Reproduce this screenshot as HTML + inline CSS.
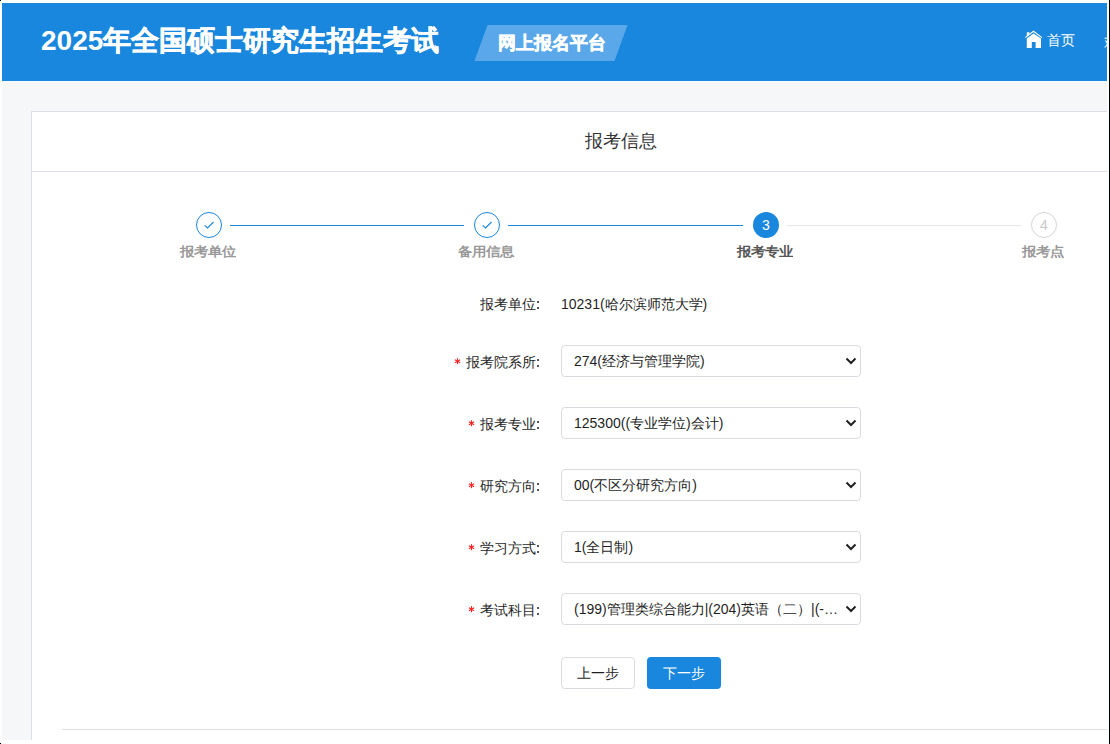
<!DOCTYPE html>
<html><head><meta charset="utf-8">
<style>
*{margin:0;padding:0;box-sizing:border-box;}
html,body{width:1110px;height:744px;overflow:hidden;background:#fff;font-family:"Liberation Sans",sans-serif;}
#frame{position:absolute;left:2px;top:3px;width:1105px;height:737px;overflow:hidden;background:#f6f7f9;}
.a{position:absolute;white-space:nowrap;}
.dot{position:absolute;background:#000;}
.stk{-webkit-text-stroke:0.5px #fff;}
.hdr{position:absolute;left:0;top:0;width:1105px;height:78px;background:#1a87de;}
.title{font-size:28px;font-weight:bold;color:#fff;line-height:36px;}
.badge{position:absolute;width:140px;height:36px;background:#5aa8ea;transform:skewX(-20deg);}
.badgetxt{font-size:18px;font-weight:bold;color:#fff;line-height:24px;}
.hometxt{font-size:14px;color:#fff;line-height:20px;}
.card{position:absolute;left:29px;top:108px;width:1180px;height:700px;background:#fff;border:1px solid #dcdfe6;}
.cardtitle{position:absolute;left:0;top:0;width:1178px;height:60px;border-bottom:1px solid #dcdfe6;}
.ct{font-size:18px;color:#333;line-height:24px;}
.step{position:absolute;width:26px;height:26px;border-radius:50%;}
.line{position:absolute;height:1px;}
.slabel{font-size:14px;font-weight:bold;line-height:18px;text-align:center;width:120px;transform:scaleY(0.9);}
.lbl{font-size:14px;color:#1f1f1f;line-height:20px;}
.col{position:absolute;width:2px;height:2px;background:#555;}
.sel{position:absolute;width:300px;height:32px;border:1px solid #d8dbe0;border-radius:4px;background:#fff;}
.sel span{position:absolute;left:12px;top:5px;font-size:14px;color:#1f1f1f;line-height:20px;white-space:nowrap;}
.sel svg{position:absolute;right:2px;top:10px;}
.btn{position:absolute;width:74px;height:32px;border-radius:4px;font-size:14px;line-height:30px;text-align:center;}
.val{font-size:14px;color:#1f1f1f;line-height:20px;}
.hr{position:absolute;height:1px;background:#dcdfe6;}
</style></head><body>
<div class="dot" style="left:0;top:0;width:1px;height:1px;"></div>
<div class="dot" style="left:0;top:743px;width:1px;height:1px;"></div>
<div class="dot" style="left:1109px;top:0;width:1px;height:744px;"></div>
<div id="frame">
  <div class="hdr"></div>
  <div class="a title" style="left:39px;top:20px;">2025<span class="stk">年全国硕士研究生招生考试</span></div>
  <div class="badge" style="left:479px;top:22px;"></div>
  <div class="a badgetxt stk" style="left:496px;top:28px;">网上报名平台</div>
  <svg class="a" style="left:1018px;top:23px;" width="28" height="26" viewBox="0 0 28 26"><polyline points="5.2,11.6 13.5,5.2 21.9,11.6" fill="none" stroke="#fff" stroke-width="1.1"/><polygon points="6.8,12.6 13.5,7.4 21,12.6 21,22 15.6,22 15.6,16 11.8,16 11.8,22 6.8,22" fill="#fff"/><polygon points="6.8,6.3 9.4,6.3 9.4,8.6 6.8,10.6" fill="#fff"/></svg>
  <div class="a hometxt" style="left:1045px;top:27px;">首页</div>
  <div class="a hometxt" style="left:1102px;top:28.5px;">欢迎</div>
  <div class="card"><div class="cardtitle"></div></div>
  <div class="a ct" style="left:583px;top:126px;">报考信息</div>
  <div class="line" style="left:228px;top:222px;width:234px;background:#1a87de"></div>
  <div class="line" style="left:506px;top:222px;width:235px;background:#1a87de"></div>
  <div class="line" style="left:785px;top:222px;width:234px;background:#e4e7ed"></div>
  <div class="step" style="left:194px;top:209px;border:1px solid #1a87de"><svg width="24" height="24" viewBox="0 0 24 24" style="position:absolute;left:0;top:0"><path d="M7.7 12.3 L10.5 14.9 L16.5 9.0" fill="none" stroke="#1a87de" stroke-width="1.1"/></svg></div>
  <div class="step" style="left:472px;top:209px;border:1px solid #1a87de"><svg width="24" height="24" viewBox="0 0 24 24" style="position:absolute;left:0;top:0"><path d="M7.7 12.3 L10.5 14.9 L16.5 9.0" fill="none" stroke="#1a87de" stroke-width="1.1"/></svg></div>
  <div class="step" style="left:751px;top:209px;background:#1a87de;color:#fff;font-size:14px;line-height:26px;text-align:center">3</div>
  <div class="step" style="left:1029px;top:209px;border:1px solid #d4d4d4;color:#c8c8c8;font-size:14px;line-height:24px;text-align:center">4</div>
  <div class="a slabel" style="left:146px;top:240px;color:#999">报考单位</div>
  <div class="a slabel" style="left:424px;top:240px;color:#999">备用信息</div>
  <div class="a slabel" style="left:703px;top:240px;color:#555">报考专业</div>
  <div class="a slabel" style="left:981px;top:240px;color:#999">报考点</div>
  <div class="a lbl" style="left:478px;top:291px;">报考单位</div>
  <div class="col" style="left:535px;top:298px;"></div>
  <div class="col" style="left:535px;top:304px;"></div>
  <div class="a val" style="left:559px;top:291px;">10231(哈尔滨师范大学)</div>
  <div class="a lbl" style="left:464px;top:349px;">报考院系所</div>
  <div class="col" style="left:535px;top:356px;"></div>
  <div class="col" style="left:535px;top:362px;"></div>
  <svg class="a" style="left:451px;top:354px;" width="9" height="9" viewBox="0 0 9 9"><g stroke="#f22" stroke-width="1.1"><line x1="4.5" y1="1.2" x2="4.5" y2="7.2"/><line x1="1.9" y1="2.7" x2="7.1" y2="5.7"/><line x1="1.9" y1="5.7" x2="7.1" y2="2.7"/></g></svg>
  <div class="sel" style="left:559px;top:342px;"><span>274(经济与管理学院)</span><svg width="14" height="10" viewBox="0 0 14 10"><path d="M2.5 2.5 L7 7 L11.5 2.5" fill="none" stroke="#222" stroke-width="2"/></svg></div>
  <div class="a lbl" style="left:478px;top:411px;">报考专业</div>
  <div class="col" style="left:535px;top:418px;"></div>
  <div class="col" style="left:535px;top:424px;"></div>
  <svg class="a" style="left:465px;top:416px;" width="9" height="9" viewBox="0 0 9 9"><g stroke="#f22" stroke-width="1.1"><line x1="4.5" y1="1.2" x2="4.5" y2="7.2"/><line x1="1.9" y1="2.7" x2="7.1" y2="5.7"/><line x1="1.9" y1="5.7" x2="7.1" y2="2.7"/></g></svg>
  <div class="sel" style="left:559px;top:404px;"><span>125300((专业学位)会计)</span><svg width="14" height="10" viewBox="0 0 14 10"><path d="M2.5 2.5 L7 7 L11.5 2.5" fill="none" stroke="#222" stroke-width="2"/></svg></div>
  <div class="a lbl" style="left:478px;top:473px;">研究方向</div>
  <div class="col" style="left:535px;top:480px;"></div>
  <div class="col" style="left:535px;top:486px;"></div>
  <svg class="a" style="left:465px;top:478px;" width="9" height="9" viewBox="0 0 9 9"><g stroke="#f22" stroke-width="1.1"><line x1="4.5" y1="1.2" x2="4.5" y2="7.2"/><line x1="1.9" y1="2.7" x2="7.1" y2="5.7"/><line x1="1.9" y1="5.7" x2="7.1" y2="2.7"/></g></svg>
  <div class="sel" style="left:559px;top:466px;"><span>00(不区分研究方向)</span><svg width="14" height="10" viewBox="0 0 14 10"><path d="M2.5 2.5 L7 7 L11.5 2.5" fill="none" stroke="#222" stroke-width="2"/></svg></div>
  <div class="a lbl" style="left:478px;top:535px;">学习方式</div>
  <div class="col" style="left:535px;top:542px;"></div>
  <div class="col" style="left:535px;top:548px;"></div>
  <svg class="a" style="left:465px;top:540px;" width="9" height="9" viewBox="0 0 9 9"><g stroke="#f22" stroke-width="1.1"><line x1="4.5" y1="1.2" x2="4.5" y2="7.2"/><line x1="1.9" y1="2.7" x2="7.1" y2="5.7"/><line x1="1.9" y1="5.7" x2="7.1" y2="2.7"/></g></svg>
  <div class="sel" style="left:559px;top:528px;"><span>1(全日制)</span><svg width="14" height="10" viewBox="0 0 14 10"><path d="M2.5 2.5 L7 7 L11.5 2.5" fill="none" stroke="#222" stroke-width="2"/></svg></div>
  <div class="a lbl" style="left:478px;top:597px;">考试科目</div>
  <div class="col" style="left:535px;top:604px;"></div>
  <div class="col" style="left:535px;top:610px;"></div>
  <svg class="a" style="left:465px;top:602px;" width="9" height="9" viewBox="0 0 9 9"><g stroke="#f22" stroke-width="1.1"><line x1="4.5" y1="1.2" x2="4.5" y2="7.2"/><line x1="1.9" y1="2.7" x2="7.1" y2="5.7"/><line x1="1.9" y1="5.7" x2="7.1" y2="2.7"/></g></svg>
  <div class="sel" style="left:559px;top:590px;"><span>(199)管理类综合能力|(204)英语（二）|(-…</span><svg width="14" height="10" viewBox="0 0 14 10"><path d="M2.5 2.5 L7 7 L11.5 2.5" fill="none" stroke="#222" stroke-width="2"/></svg></div>
  <div class="btn" style="left:559px;top:654px;border:1px solid #d8dbe0;background:#fff;color:#1f1f1f">上一步</div>
  <div class="btn" style="left:645px;top:654px;background:#1a87de;color:#fff;line-height:32px">下一步</div>
  <div class="hr" style="left:60px;top:726px;width:1100px"></div>
</div>
</body></html>
